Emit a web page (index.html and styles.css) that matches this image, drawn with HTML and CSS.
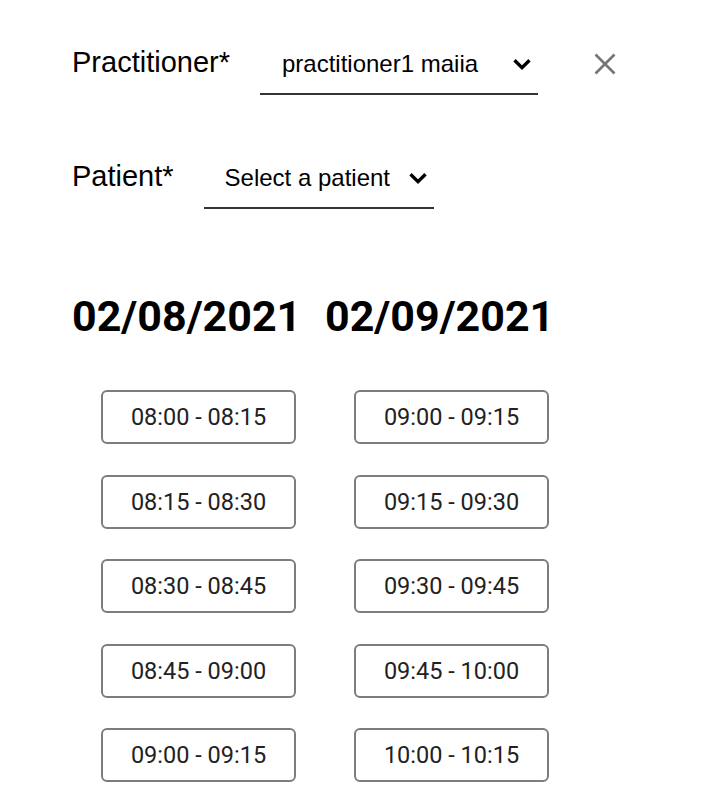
FILE: index.html
```html
<!DOCTYPE html>
<html>
<head>
<meta charset="utf-8">
<link rel="stylesheet" href="styles.css">
</head>
<body>
<div class="page">
  <div class="field-row practitioner-row">
    <label class="field-label">Practitioner*</label>
    <div class="select select-practitioner">
      <span class="select-value">practitioner1 maiia</span>
      <svg class="chevron" width="20" height="12" viewBox="0 0 20 12"><polyline points="2.5,2.3 10,9.6 17.5,2.3" fill="none" stroke="#000" stroke-width="3.4"/></svg>
    </div>
    <button class="close-btn" aria-label="close">
      <svg width="22" height="22" viewBox="0 0 22 22"><path d="M1.5 1.5 L20.5 20.5 M20.5 1.5 L1.5 20.5" stroke="#757575" stroke-width="2.6" fill="none"/></svg>
    </button>
  </div>

  <div class="field-row patient-row">
    <label class="field-label">Patient*</label>
    <div class="select select-patient">
      <span class="select-value">Select a patient</span>
      <svg class="chevron" width="20" height="12" viewBox="0 0 20 12"><polyline points="2.5,2.3 10,9.6 17.5,2.3" fill="none" stroke="#000" stroke-width="3.4"/></svg>
    </div>
  </div>

  <div class="days">
    <div class="day">
      <h2 class="day-title">02/08/2021</h2>
      <div class="slots">
        <button class="slot">08:00 - 08:15</button>
        <button class="slot">08:15 - 08:30</button>
        <button class="slot">08:30 - 08:45</button>
        <button class="slot">08:45 - 09:00</button>
        <button class="slot">09:00 - 09:15</button>
      </div>
    </div>
    <div class="day">
      <h2 class="day-title">02/09/2021</h2>
      <div class="slots">
        <button class="slot">09:00 - 09:15</button>
        <button class="slot">09:15 - 09:30</button>
        <button class="slot">09:30 - 09:45</button>
        <button class="slot">09:45 - 10:00</button>
        <button class="slot">10:00 - 10:15</button>
      </div>
    </div>
  </div>
</div>
</body>
</html>
```

FILE: styles.css
```css
html, body {
  margin: 0;
  padding: 0;
  background: #fff;
}

.page {
  padding: 46px 0 0 72px;
  font-family: "Liberation Sans", Arial, sans-serif;
  color: #000;
}

.field-row {
  display: flex;
  align-items: flex-start;
  gap: 30px;
}

.patient-row {
  margin-top: 65px;
}

.field-label {
  font-size: 29px;
  line-height: 32px;
}

.select {
  display: flex;
  align-items: center;
  box-sizing: border-box;
  padding: 4px 6px 15px 21px;
  border-bottom: 2px solid #333;
  font-size: 24px;
  line-height: 28px;
}

.select-practitioner {
  width: 278px;
  padding-left: 22px;
}

.select-patient {
  width: 230px;
}

.chevron {
  margin-left: auto;
  display: block;
}

.close-btn {
  margin: 7px 0 0 26px;
  padding: 0;
  border: 0;
  background: none;
  display: block;
  line-height: 0;
}

.days {
  margin-top: 81px;
  display: grid;
  grid-template-columns: 253px 253px;
}

.day {
  display: flex;
  flex-direction: column;
}

.day-title {
  margin: 0;
  font-family: Roboto, "Liberation Sans", sans-serif;
  font-weight: 700;
  font-size: 43px;
  line-height: 52px;
  white-space: nowrap;
}

.slots {
  margin: 48px 0 0 29px;
  display: flex;
  flex-direction: column;
  gap: 30.6px;
}

.slot {
  box-sizing: border-box;
  width: 195px;
  height: 54px;
  border: 2px solid #7d7d7d;
  border-radius: 6px;
  background: #fff;
  font-family: Roboto, "Liberation Sans", sans-serif;
  font-size: 23.5px;
  color: #222;
  padding: 0;
  display: flex;
  align-items: center;
  justify-content: center;
}
```
